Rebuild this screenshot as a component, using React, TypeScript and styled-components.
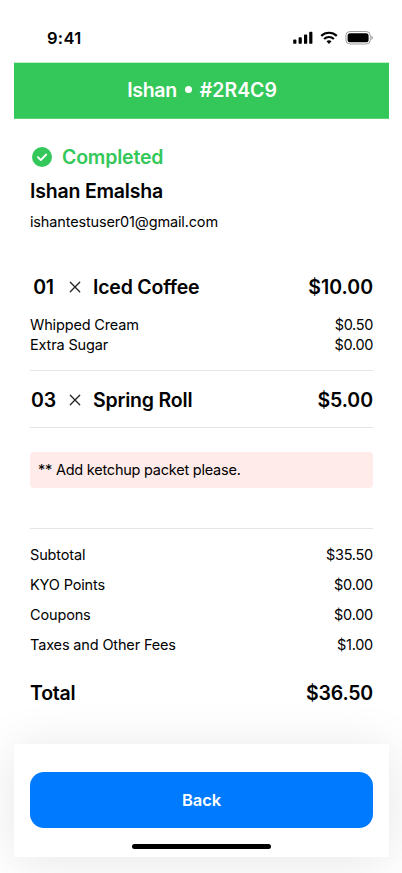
import React from 'react';
import styled, { createGlobalStyle } from 'styled-components';

const Global = createGlobalStyle`
  * { box-sizing: border-box; }
  body { margin: 0; background: #fff; font-family: Inter, "Liberation Sans", sans-serif; color: #000; }
`;

const Page = styled.div`
  width: 402px;
  height: 873px;
  padding: 14px 13px 16px 14px;
  background: #fff;
  overflow: hidden;
`;

const Phone = styled.div`
  height: 100%;
  display: flex;
  flex-direction: column;
`;

const StatusBar = styled.div`
  height: 48px;
  flex: none;
  display: flex;
  justify-content: space-between;
  align-items: center;
  padding: 0 16px 0 33px;
`;

const Clock = styled.span`
  font-size: 16.5px;
  font-weight: 600;
  letter-spacing: 0.3px;
`;

const StatusIcons = styled.svg`
  display: block;
`;

const Header = styled.header`
  height: 57px;
  flex: none;
  background: #34c759;
  border-top: 1px solid #c2eecd;
  border-bottom: 1px solid #5ad278;
  color: #fff;
  display: flex;
  align-items: center;
  justify-content: center;
  gap: 8px;
  padding: 0 0 2px 1px;
`;

const HeaderDot = styled.i`
  width: 7px;
  height: 7px;
  border-radius: 50%;
  background: currentColor;
`;

const Content = styled.main`
  flex: 1;
  padding: 0 16px;
  display: flex;
  flex-direction: column;
`;

const Body = styled.span<{ $spacing?: number }>`
  font-size: 14.5px;
  letter-spacing: ${(p) => p.$spacing ?? -0.15}px;
  white-space: nowrap;
`;

const Title = styled.span<{ $spacing?: number; $color?: string }>`
  font-size: 19.5px;
  font-weight: 600;
  letter-spacing: ${(p) => p.$spacing ?? -0.2}px;
  color: ${(p) => p.$color ?? 'inherit'};
  white-space: nowrap;
`;

const StatusRow = styled.div`
  margin-top: 26px;
  height: 24px;
  display: flex;
  align-items: center;
  gap: 10px;
  padding-left: 2px;
`;

const Row = styled.div<{ $h: number; $top?: number }>`
  height: ${(p) => p.$h}px;
  margin-top: ${(p) => p.$top ?? 0}px;
  display: flex;
  flex: none;
  align-items: center;
  justify-content: space-between;
`;

const ItemName = styled.div`
  display: grid;
  grid-template-columns: 27px 36px auto;
  align-items: center;
  justify-items: center;
`;

const Divider = styled.hr<{ $top: number }>`
  width: 100%;
  height: 1px;
  flex: none;
  border: 0;
  margin: ${(p) => p.$top}px 0 0;
  background: #e5e5e5;
`;

const Note = styled.div`
  height: 36px;
  margin-top: 24px;
  padding: 0 8px 2px;
  display: flex;
  align-items: center;
  background: #ffebe9;
  border-radius: 4px;
`;

const Footer = styled.footer`
  height: 113px;
  flex: none;
  padding: 28px 16px 0;
  background: #fff;
  box-shadow: 0 4px 50px rgba(0, 0, 0, 0.1);
`;

const BackButton = styled.button`
  display: block;
  width: 100%;
  height: 56px;
  border: 0;
  border-radius: 14px;
  background: #007aff;
  color: #fff;
  font: 600 16.5px Inter, sans-serif;
  letter-spacing: -0.1px;
`;

const HomeBar = styled.div`
  width: 139px;
  height: 5px;
  margin: 16px auto 0;
  border-radius: 3px;
  background: #000;
`;

const Times = () => (
  <svg width="12" height="12" viewBox="0 0 12 12" stroke="#222" strokeWidth="1.3" strokeLinecap="round">
    <path d="M1.3 1.3l9.4 9.4M10.7 1.3l-9.4 9.4" />
  </svg>
);

const Check = () => (
  <svg width="20" height="20" viewBox="0 0 20 20">
    <circle cx="10" cy="10" r="10" fill="#34c759" />
    <path d="M5.9 10.2l2.9 2.9 5.4-5.6" fill="none" stroke="#fff" strokeWidth="1.9" strokeLinecap="round" strokeLinejoin="round" />
  </svg>
);

const fees = [['Subtotal', '$35.50'], ['KYO Points', '$0.00'], ['Coupons', '$0.00'], ['Taxes and Other Fees', '$1.00']];

export default function App() {
  return (
    <Page>
      <Global />
      <Phone>
        <StatusBar>
          <Clock>9:41</Clock>
          <StatusIcons width="80" height="14" viewBox="0 0 80 14">
            <rect x="0.2" y="8.5" width="3.2" height="4.3" rx="0.9" />
            <rect x="5.6" y="6.2" width="3.2" height="6.6" rx="0.9" />
            <rect x="11" y="3.6" width="3.2" height="9.2" rx="0.9" />
            <rect x="16.2" y="0.8" width="3.2" height="12" rx="0.9" />
            <g fill="none" stroke="#000" strokeWidth="2.2">
              <path d="M28.2 4.9a11.2 11.2 0 0 1 15.6 0" />
              <path d="M31.1 8a7 7 0 0 1 9.8 0" />
            </g>
            <path d="M36 12.9l-2.5-2.6a3.7 3.7 0 0 1 5 0z" />
            <rect x="52.9" y="0.5" width="24.4" height="12.5" rx="4" fill="none" stroke="#000" strokeOpacity="0.38" />
            <rect x="54.6" y="2.2" width="21" height="9.1" rx="2.6" />
            <path d="M78.5 4.8v4.1c.8-.35 1.3-1.1 1.3-2.05s-.5-1.7-1.3-2.05z" fillOpacity="0.45" />
          </StatusIcons>
        </StatusBar>
        <Header>
          <Title $spacing={-0.3}>Ishan</Title>
          <HeaderDot />
          <Title $spacing={-0.05}>#2R4C9</Title>
        </Header>
        <Content>
          <StatusRow><Check /><Title $color="#34c759">Completed</Title></StatusRow>
          <Row $h={24} $top={10}><Title>Ishan Emalsha</Title></Row>
          <Row $h={20} $top={8}><Body>ishantestuser01@gmail.com</Body></Row>
          <Row $h={24} $top={44}>
            <ItemName><Title>01</Title><Times /><Title>Iced Coffee</Title></ItemName>
            <Title $spacing={0}>$10.00</Title>
          </Row>
          <Row $h={20} $top={15}><Body>Whipped Cream</Body><Body $spacing={-0.35}>$0.50</Body></Row>
          <Row $h={20}><Body>Extra Sugar</Body><Body $spacing={-0.35}>$0.00</Body></Row>
          <Divider $top={16} />
          <Row $h={24} $top={17}>
            <ItemName><Title>03</Title><Times /><Title>Spring Roll</Title></ItemName>
            <Title $spacing={-0.05}>$5.00</Title>
          </Row>
          <Divider $top={15} />
          <Note><Body $spacing={-0.23}>** Add ketchup packet please.</Body></Note>
          <Divider $top={40} />
          {fees.map(([label, amount], i) => (
            <Row key={label} $h={20} $top={i ? 10 : 15}><Body>{label}</Body><Body $spacing={-0.25}>{amount}</Body></Row>
          ))}
          <Row $h={24} $top={27}><Title>Total</Title><Title>$36.50</Title></Row>
        </Content>
        <Footer><BackButton>Back</BackButton><HomeBar /></Footer>
      </Phone>
    </Page>
  );
}
